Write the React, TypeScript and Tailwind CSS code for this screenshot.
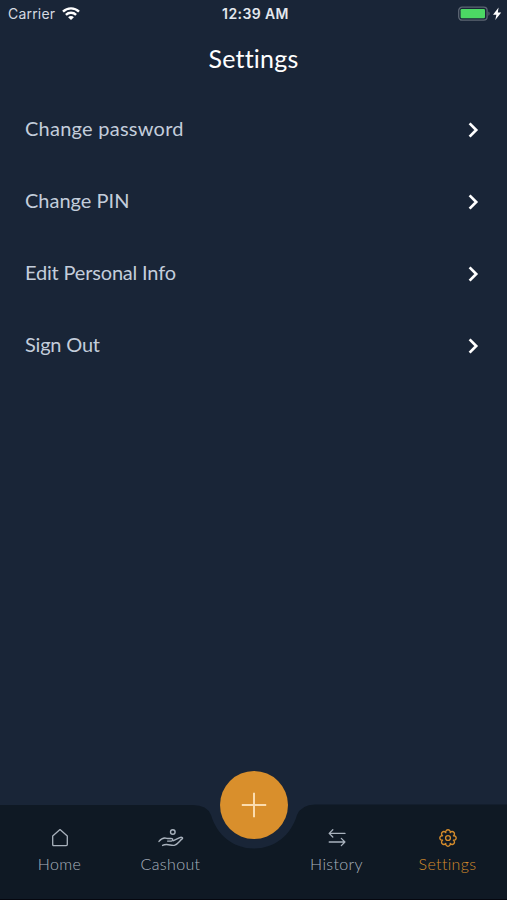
import React from 'react';

const settingsItems = [
  { label: 'Change password', tracking: 'tracking-[0.25px]' },
  { label: 'Change PIN', tracking: 'tracking-[0px]' },
  { label: 'Edit Personal Info', tracking: 'tracking-[-0.18px]' },
  { label: 'Sign Out', tracking: 'tracking-[-0.2px]' },
];

function WifiIcon() {
  return (
    <svg width="18" height="14" viewBox="0 0 18 14" fill="none" stroke="#fff" strokeWidth="2.4">
      <path d="M1 4.7A11.4 11.4 0 0 1 17 4.7" />
      <path d="M3.9 7.9A7.3 7.3 0 0 1 14.1 7.9" />
      <path d="M9 13L6.1 10.2A3.9 3.9 0 0 1 11.9 10.2Z" fill="#fff" stroke="none" />
    </svg>
  );
}

function BatteryIcon() {
  return (
    <svg width="44" height="16" viewBox="0 0 44 16" fill="none">
      <rect x="0.7" y="1.2" width="28.4" height="13" rx="3.4" stroke="#5c6673" strokeWidth="1.3" />
      <rect x="2.6" y="3.1" width="24.4" height="9.2" rx="1.2" fill="#4cd964" />
      <path d="M30.4 5.6C32 6.2 32 9.2 30.4 9.8Z" fill="#5c6673" />
      <path d="M40.6 1.6L35 8.8H38.4L37.3 14L43.2 6.6H39.8Z" fill="#fff" />
    </svg>
  );
}

function ChevronIcon() {
  return (
    <svg width="12" height="16" viewBox="0 0 12 16" fill="none" stroke="#fff" strokeWidth="2.7">
      <path d="M1.6 1.4L8.2 8L1.6 14.6" />
    </svg>
  );
}

function HomeIcon() {
  return (
    <svg width="18" height="20" viewBox="0 0 18 20" fill="none" stroke="currentColor" strokeWidth="1.3" strokeLinejoin="round">
      <path d="M1.7 8L9 1.6L16.3 8V16.6Q16.3 17.7 15.2 17.7H2.8Q1.7 17.7 1.7 16.6Z" />
    </svg>
  );
}

function CashoutIcon() {
  return (
    <svg width="26" height="20" viewBox="0 0 26 20" fill="none" stroke="currentColor" strokeWidth="1.4" strokeLinecap="round" strokeLinejoin="round">
      <circle cx="14.8" cy="4" r="2.3" />
      <path d="M1 13.4C3.2 10.6 6 9.4 8.8 10.3C10.6 10.9 12.6 10.2 14 10.6C15.2 11 14.8 12.9 13.4 13.1H9.6" />
      <path d="M15.4 12.7L21.2 9.8C22.8 9.1 25.3 9 24.4 10.7C22 12.3 19.6 16.4 16.8 17.2C13.2 18.4 9.4 14.8 4.6 17.4" />
    </svg>
  );
}

function HistoryIcon() {
  return (
    <svg width="18" height="20" viewBox="0 0 18 20" fill="none" stroke="currentColor" strokeWidth="1.3" strokeLinecap="round" strokeLinejoin="round">
      <path d="M17 5.4H1.2M4.8 1.8L1.2 5.4L4.8 9" />
      <path d="M1.2 14H16.9M13.3 10.4L16.9 14L13.3 17.6" />
    </svg>
  );
}

function GearIcon() {
  return (
    <svg width="20" height="20" viewBox="-10 -10 20 20" fill="none" stroke="currentColor" strokeWidth="1.4" strokeLinejoin="round">
      <path d="M-2.26 -5.45A2.3 2.3 0 1 1 2.26 -5.45A2.3 2.3 0 1 1 5.45 -2.26A2.3 2.3 0 1 1 5.45 2.26A2.3 2.3 0 1 1 2.26 5.45A2.3 2.3 0 1 1 -2.26 5.45A2.3 2.3 0 1 1 -5.45 2.26A2.3 2.3 0 1 1 -5.45 -2.26A2.3 2.3 0 1 1 -2.26 -5.45Z" />
      <circle r="2.4" />
    </svg>
  );
}

interface TabProps {
  label: string;
  icon: React.ReactNode;
  active?: boolean;
}

function Tab({ label, icon, active }: TabProps) {
  return (
    <button
      className={`flex w-[111px] flex-col items-center pt-6 text-base leading-5 font-light tracking-[0.35px] ${
        active ? 'text-[#d48b2b]' : 'text-[#a9b2bd]'
      }`}
    >
      <span className="flex h-5 items-center">{icon}</span>
      <span className="mt-[6px]">{label}</span>
    </button>
  );
}

export default function App() {
  return (
    <div className="flex h-[900px] w-[507px] flex-col overflow-hidden bg-[#192537] font-[Lato,sans-serif] text-white">
      {/* Status bar */}
      <div className="grid h-7 grid-cols-3 items-center pl-2 pr-[5px] font-[Inter,sans-serif] text-sm">
        <div className="flex items-center gap-[7px] text-[#d5dae1]">
          <span className="tracking-[0.2px]">Carrier</span>
          <WifiIcon />
        </div>
        <div className="pl-px text-center font-semibold tracking-[0.4px] text-[#e4e8ee]">12:39 AM</div>
        <div className="flex justify-end">
          <BatteryIcon />
        </div>
      </div>

      <h1 className="mt-[13px] text-center text-[25px] leading-[34px] tracking-[0.2px]">Settings</h1>

      {/* Settings list */}
      <ul className="mt-[17px] flex-1">
        {settingsItems.map((item) => (
          <li key={item.label} className="flex h-[72px] items-center justify-between pl-[25px] pr-[27px]">
            <span className={`pb-px text-xl text-[#c3cddb] ${item.tracking}`}>{item.label}</span>
            <span className="pt-[3px]">
              <ChevronIcon />
            </span>
          </li>
        ))}
      </ul>

      {/* Tab bar */}
      <nav className="relative h-24 border-b border-[#05070f]">
        <svg className="absolute inset-0" width="507" height="95" viewBox="0 0 507 95">
          <path d="M0 1H193Q207 1 211 11C217 31 233 44.5 254 44.5C275 44.5 291 31 297 11Q301 1 315 0.5H507V95H0Z" fill="#0f1924" />
        </svg>
        <div className="relative flex justify-between px-1">
          <div className="flex">
            <Tab label="Home" icon={<HomeIcon />} />
            <Tab label="Cashout" icon={<CashoutIcon />} />
          </div>
          <div className="flex">
            <Tab label="History" icon={<HistoryIcon />} />
            <Tab label="Settings" icon={<GearIcon />} active />
          </div>
        </div>
        <button className="absolute left-[220px] top-[-33.5px] flex size-[68px] items-center justify-center rounded-full bg-[#d98f2c]">
          <svg width="26" height="26" viewBox="0 0 26 26" stroke="#fbdcae" strokeWidth="2">
            <path d="M13 0.8V25.2M0.8 13H25.2" />
          </svg>
        </button>
      </nav>
    </div>
  );
}
